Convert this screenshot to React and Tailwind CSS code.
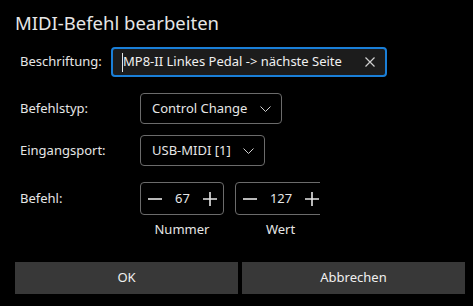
import React from "react"

const Chevron = () => (
  <svg width="11" height="6" viewBox="0 0 11 6" fill="none" className="shrink-0">
    <path d="M0.5 0.5 L5.5 5.5 L10.5 0.5" stroke="#cfcfcf" strokeWidth="1" />
  </svg>
)

const Minus = () => (
  <svg width="14" height="14" viewBox="0 0 14 14" className="shrink-0">
    <path d="M0 7 H14" stroke="#e6e6e6" strokeWidth="1.6" />
  </svg>
)

const Plus = () => (
  <svg width="14" height="14" viewBox="0 0 14 14" className="shrink-0">
    <path d="M0 7 H14 M7 0 V14" stroke="#e6e6e6" strokeWidth="1.6" />
  </svg>
)

const NumberBox = ({ value, label }) => (
  <div className="flex flex-col items-center shrink-0">
    <div className="h-[33px] border border-[#6b6b6b] rounded-[4px] flex items-center gap-[13px] pl-[7px] pr-[6px]">
      <Minus />
      <span className="text-[13px] text-[#e6e6e6]">{value}</span>
      <Plus />
    </div>
    <span className="mt-[4px] text-[13px] text-[#e6e6e6] leading-[20px]">{label}</span>
  </div>
)

export default function App() {
  return (
    <div
      className="w-[473px] h-[306px] bg-black text-[#e6e6e6] overflow-hidden"
      style={{ fontFamily: '"Segoe UI", "Noto Sans", "Open Sans", sans-serif' }}
    >
      <h1 className="pl-[15px] pt-[10px] text-[18.5px] leading-[26px] text-[#e6e6e6]">MIDI-Befehl bearbeiten</h1>

      {/* Beschriftung */}
      <div className="flex items-center mt-[11px] h-[30px]">
        <span className="w-[111px] pl-[20px] text-[13px]">Beschriftung:</span>
        <div className="w-[276px] h-[30px] border-2 border-[#1a7fd8] rounded-[4px] bg-[#1c1c1c] flex items-center pl-[9px] pr-[9px]">
          <span className="w-px h-[19px] bg-[#e6e6e6]" />
          <span className="text-[13px] text-[#f0f0f0] whitespace-nowrap">MP8-II Linkes Pedal -&gt; nächste Seite</span>
          <svg width="10" height="10" viewBox="0 0 10 10" className="ml-auto mr-[1px]">
            <path d="M0.5 0.5 L9.5 9.5 M9.5 0.5 L0.5 9.5" stroke="#cfcfcf" strokeWidth="1.2" />
          </svg>
        </div>
      </div>

      {/* Befehlstyp */}
      <div className="flex items-center mt-[16px] h-[31px]">
        <span className="w-[140px] pl-[20px] text-[13px]">Befehlstyp:</span>
        <div className="w-[142px] h-[31px] border border-[#6b6b6b] rounded-[4px] flex items-center justify-between pl-[11px] pr-[10px]">
          <span className="text-[13px] whitespace-nowrap">Control Change</span>
          <Chevron />
        </div>
      </div>

      {/* Eingangsport */}
      <div className="flex items-center mt-[11px] h-[31px]">
        <span className="w-[140px] pl-[20px] text-[13px]">Eingangsport:</span>
        <div className="w-[125px] h-[31px] border border-[#6b6b6b] rounded-[4px] flex items-center justify-between pl-[11px] pr-[10px]">
          <span className="text-[13px] whitespace-nowrap">USB-MIDI [1]</span>
          <Chevron />
        </div>
      </div>

      {/* Befehl */}
      <div className="flex items-start mt-[16px]">
        <span className="w-[140px] pl-[20px] text-[13px] h-[33px] flex items-center">Befehl:</span>
        <div className="w-[180px] overflow-hidden flex gap-[11px]">
          <NumberBox value="67" label="Nummer" />
          <NumberBox value="127" label="Wert" />
        </div>
      </div>

      {/* Buttons */}
      <div className="flex gap-[4px] pl-[15px] pr-[8px] mt-[23px]">
        <button className="flex-1 h-[32px] bg-[#383838] text-[13px] text-[#f0f0f0]">OK</button>
        <button className="flex-1 h-[32px] bg-[#383838] text-[13px] text-[#f0f0f0]">Abbrechen</button>
      </div>
    </div>
  )
}
